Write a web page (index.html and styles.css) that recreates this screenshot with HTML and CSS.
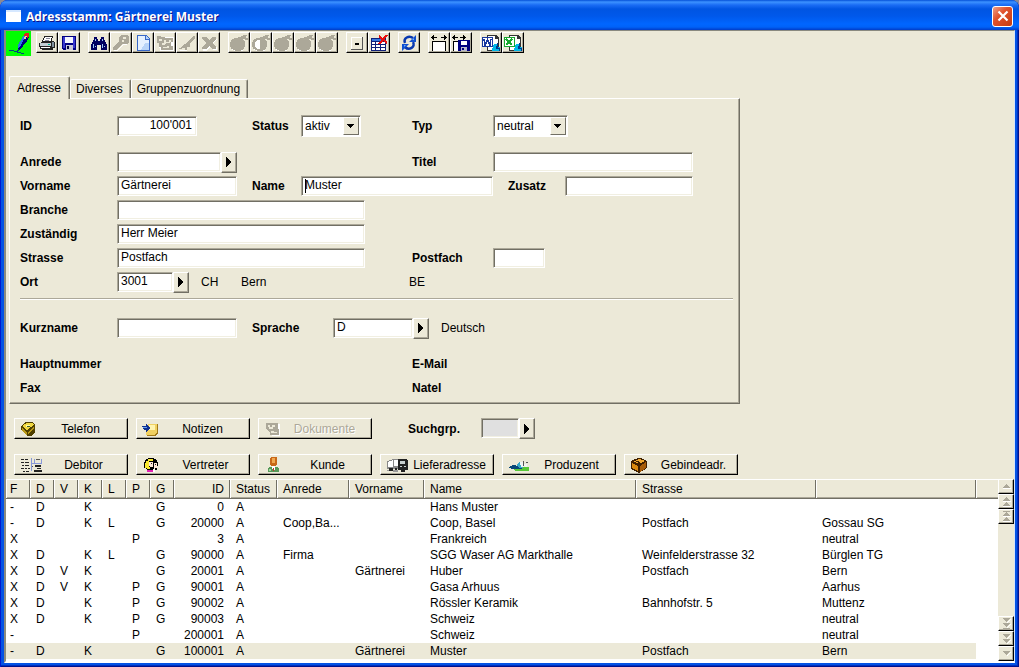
FILE: index.html
```html
<!DOCTYPE html>
<html lang="de">
<head>
<meta charset="utf-8">
<title>Adressstamm: Gärtnerei Muster</title>
<link rel="stylesheet" href="styles.css">
</head>
<body>
<svg class="defs" aria-hidden="true">
  <symbol id="i-right" viewBox="0 0 6 10"><path d="M0 0h1v1h1v1h1v1h1v1h1v2h-1v1h-1v1h-1v1h-1v1h-1z"/></symbol>
  <symbol id="i-drop" viewBox="0 0 8 4"><path d="M0 0h7v1h-1v1h-1v1h-1v1h-1v-1h-1v-1h-1v-1h-1z"/></symbol>
  <symbol id="i-bomb" viewBox="0 0 20 18"><path fill="#fff" d="M4 5h9v2h2v7h-1v3h-9v-1h-2v-3h-1v-6h2z"/><path fill="#aca899" d="M5 4h4v-1h4v1h1v2h1v1h1v6h-1v2h-1v1h-2v1h-6v-1h-2v-1h-2v-2h-1v-5h1v-2h1v-1h2zM12 2h2v-1h4v1h-1v2h2v2h-3v-1h-4z"/></symbol>
  <symbol id="i-up" viewBox="0 0 9 5"><path fill="#aca899" d="M4 0h1v1h1v1h1v1h1v1h-7v-1h1v-1h1v-1h1z"/><path fill="#fff" d="M1 4h8v1h-8z"/></symbol>
  <symbol id="i-down" viewBox="0 0 9 5"><path fill="#aca899" d="M1 0h7v1h-1v1h-1v1h-1v1h-1v-1h-1v-1h-1v-1h-1z"/><path fill="#fff" d="M8 1h1v1h-1v1h-1v1h-1v1h-1v-1h1v-1h1v-1h1z"/></symbol>
</svg>

<div class="window">
  <header class="titlebar">
    <svg class="appicon" viewBox="0 0 15 12"><rect width="15" height="12" fill="#fff"/><rect x="0" y="0" width="15" height="2" fill="#d6e8ff"/></svg>
    <h1>Adressstamm: Gärtnerei Muster</h1>
    <button class="close" aria-label="Schliessen"><svg viewBox="0 0 12 12" width="12" height="12"><path d="M1.500 1.500l9 9M10.500 1.500l-9 9" stroke="#fff" stroke-width="2.200"/></svg></button>
  </header>

  <main class="client">
    <div class="toolbar" role="toolbar">
      <button class="edit" aria-label="Bearbeiten"><svg viewBox="0 0 25 25"><path fill="#000080" d="M19 3h4v3l-2 4-4 5-4 4h-1v-3l2-5z"/><path fill="#2878e0" d="M18 4h2l-5 10-3 3v-3z"/><path fill="#e02020" d="M19 2h4v3l-1 2-4-2z"/><path fill="#f4c8a0" d="M19 5h2l-1 3h-2z"/><path fill="none" stroke="#004080" d="M13 18l-2 3-3-1-5-1M11 21l4 1h3"/></svg></button>
      <div class="tools">
        <button aria-label="Drucken"><svg viewBox="0 0 20 18"><path fill="#222" d="M7 2h9v2h-1v3h2v1h1v6h-2v2h-11v-1h-2v-2h-1v-4h2v-1h1v-2h1v-2h1z"/><path fill="#fff" d="M8 3h7v1h-1v3h-8v-1h1v-2h1zM4 13h9v1h-9z"/><path fill="#889" d="M9 4h4v1h-4zM8 6h4v1h-4z"/><path fill="#c4ced4" d="M3 9h11v3h-11z"/><path fill="#0b9" d="M11 10h2v1h-2z"/><path fill="#8090a0" d="M15 8h2v5h-2z"/></svg></button>
        <button aria-label="Speichern"><svg viewBox="0 0 20 18"><path fill="#000080" d="M3 2h14v14h-13l-1-1z"/><path fill="#3838d0" d="M4 3h2v11h-2zM14 3h2v11h-2z"/><path fill="#f4f6ff" d="M6 3h8v6h-8z"/><path fill="#c8c8d8" d="M7 11h7v5h-7z"/><path fill="#000040" d="M8 12h2v3h-2z"/></svg></button>
      </div>
      <div class="tools">
        <button aria-label="Suchen"><svg viewBox="0 0 20 18"><path fill="#000060" d="M5 3h3v2h1v2h2v-2h1v-2h3v3h1v2h1v2h1v6h-6v-5h-4v5h-6v-6h1v-2h1v-2h1z"/><path fill="#9cc8f8" d="M6 5h1v2h-1zM13 5h1v2h-1zM4 10h1v4h-1zM13 10h1v4h-1zM6 12h1v1h-1zM15 12h1v1h-1z"/></svg></button>
        <button disabled aria-label="Schlüssel"><svg viewBox="0 0 20 18"><path fill="#aca899" d="M10 1h6l2 2v5l-2 2h-5l-6 6h-3v-3l6-5v-5z"/><path fill="#ece9d8" d="M12 3h3v2h-3zM11 6h2v2h-2z"/><path fill="#fff" d="M6 16l6-6h4v1h-4l-6 6h-3v-1z"/></svg></button>
        <button aria-label="Neu"><svg viewBox="0 0 20 18"><path fill="#3868c8" d="M4 1h9l4 4v12h-13z"/><path fill="#e4f0ff" d="M5 2h7v4h4v10h-11z"/><path fill="#b8d4f8" d="M13 2l3 3h-3zM12 9h4v7h-8z"/></svg></button>
        <button disabled aria-label="Kopieren"><svg viewBox="0 0 20 18"><path fill="#fff" d="M3 3h16v14h-14z"/><path fill="#aca899" d="M2 2h4v1h4v1h8v4h-2v4h2v4h-12v-3h-2v-4h-2z"/><path fill="#ece9d8" d="M4 5h3v2h-3zM9 6h2v2h3v-2h2v1l-2 2h-3l-2 2h-2v-2h2zM8 13h4v-1h2v2h-6z"/></svg></button>
        <button disabled aria-label="Ändern"><svg viewBox="0 0 20 18"><path fill="#fff" d="M18 3l-8 9v5h-7v-1h6v-5z"/><path fill="#aca899" d="M16 2h2v2l-5 5v2l-4 3v2h-1v-2h-3v1h-3v-1l3-1 2-3 3-1 1-2z"/><path fill="#aca899" d="M9 9h4v4h-3v3h-2v-5h1z"/></svg></button>
        <button disabled aria-label="Löschen"><svg viewBox="0 0 20 18"><path fill="#fff" d="M5 5h3l3 3 3-3h4l-4 4 4 5v2h-4l-3-3-4 4h-3v-2l4-4z"/><path fill="#aca899" d="M3 3h4l3 3 3-3h4v2l-4 4 4 4v2h-4l-3-3-3 3h-4v-2l4-4-4-4z"/></svg></button>
      </div>
      <div class="tools">
        <button disabled aria-label="Anfang"><svg><use href="#i-bomb"/></svg></button>
        <button disabled aria-label="Zurück"><svg viewBox="0 0 20 18"><use href="#i-bomb"/><path fill="#fff" d="M6 6h3v9h-3l-2-2v-5z"/></svg></button>
        <button disabled aria-label="Stopp"><svg><use href="#i-bomb"/></svg></button>
        <button disabled aria-label="Vor"><svg><use href="#i-bomb"/></svg></button>
        <button disabled aria-label="Ende"><svg><use href="#i-bomb"/></svg></button>
      </div>
      <div class="tools">
        <button aria-label="Minimieren"><svg viewBox="0 0 20 18"><path fill="#fff" d="M4 3h12v12h-12z"/><path fill="#555" d="M15 3h1v13h-12v-1h11z"/><path fill="#ece9d8" d="M5 4h10v11h-10z"/><path d="M8 9h4v2h-4z"/></svg></button>
        <button aria-label="Tabelle löschen"><svg viewBox="0 0 20 18"><path fill="#102078" d="M2 4h15v13h-15z"/><path fill="#3878e0" d="M3 5h13v2h-13z"/><path fill="#fff" d="M3 8h3v2h-3zM7 8h4v2h-4zM12 8h4v2h-4zM3 11h3v2h-3zM7 11h4v2h-4zM12 11h4v2h-4zM3 14h3v2h-3zM7 14h4v2h-4zM12 14h4v2h-4z"/><path fill="none" stroke="#e81010" stroke-width="2" d="M10 2l8 7M18 1l-8 9"/></svg></button>
      </div>
      <div class="tools">
        <button aria-label="Aktualisieren"><svg class="smooth" viewBox="0 0 20 18"><path fill="none" stroke="#0838b0" stroke-width="2.500" d="M6 9C4 4 10 1 14 4M14 8c3 5-4 9-8 5"/><path fill="#1050d0" d="M17 1v7h-7zM3 17v-7h7z"/><path fill="#70b0ff" d="M15 4v2h-2zM5 13v-2h2z"/></svg></button>
      </div>
      <div class="tools">
        <button aria-label="Spaltenbreite"><svg viewBox="0 0 20 18"><path d="M2 3h1v-1h1v-1h1v2h3v1h-3v2h-1v-1h-1v-1h-1zM12 3h3v-2h1v1h1v1h1v1h-1v1h-1v1h-1v-2h-3z"/><path d="M3 7h14v10h-1v-9h-12v9h-1z"/><path fill="#fff" d="M4 8h12v9h-12z"/></svg></button>
        <button aria-label="Spaltenbreite speichern"><svg viewBox="0 0 20 18"><path d="M1 3h1v-1h1v-1h1v2h3v1h-3v2h-1v-1h-1v-1h-1zM9 3h3v-2h1v1h1v1h1v1h-1v1h-1v1h-1v-2h-3zM2 7h6v1h-5v9h-1z"/><path fill="#fff" d="M3 8h4v9h-4z"/><path fill="#000080" d="M7 6h12v11h-12z"/><path fill="#fff" d="M10 7h6v4h-6z"/><path fill="#bbc" d="M10 13h6v4h-6z"/><path fill="#000080" d="M11 14h2v2h-2z"/></svg></button>
      </div>
      <div class="tools">
        <button aria-label="Word"><svg viewBox="0 0 20 18"><path fill="#333" d="M6 1h9l3 3v13h-12z"/><path fill="#fff" d="M7 2h7v3h3v11h-10z"/><path fill="#1838a0" d="M1 3h11v10h-11z"/><path fill="#fff" d="M2 4h9v8h-9z"/><path fill="none" stroke="#1838a0" stroke-width="1.500" d="M3 5l1 6 2.500-5 2.500 5 1-6"/><path fill="#00b8e8" d="M13 10h4v3h2v4h-8v-2z"/><path fill="#003890" d="M16 9h1v5h2v3h-1v-2h-3z"/></svg></button>
        <button aria-label="Excel"><svg viewBox="0 0 20 18"><path fill="#333" d="M6 1h9l3 3v13h-12z"/><path fill="#fff" d="M7 2h7v3h3v11h-10z"/><path fill="#18a830" d="M1 3h11v10h-11z"/><path fill="#fff" d="M2 4h9v8h-9z"/><path fill="none" stroke="#18a830" stroke-width="2" d="M3 5l6 6M9 5l-6 6"/><path fill="#00b8e8" d="M13 10h4v3h2v4h-8v-2z"/><path fill="#003890" d="M16 9h1v5h2v3h-1v-2h-3z"/></svg></button>
      </div>
    </div>

    <div class="tabs" role="tablist">
      <button role="tab" aria-selected="true" class="tab active">Adresse</button>
      <button role="tab" aria-selected="false" class="tab">Diverses</button>
      <button role="tab" aria-selected="false" class="tab">Gruppenzuordnung</button>
    </div>

    <form class="panel" role="tabpanel">
      <div class="fields">
        <label class="c1" for="id">ID</label><input class="c2 w80 num" id="id" value="100'001">
        <label class="c3" for="status">Status</label><span class="c4 combo w60"><select id="status"><option>aktiv</option></select><i><svg><use href="#i-drop"/></svg></i></span>
        <label class="c6" for="typ">Typ</label><span class="c7 combo w75"><select id="typ"><option>neutral</option></select><i><svg><use href="#i-drop"/></svg></i></span>
      </div>
      <div class="fields">
        <label class="c1" for="anrede">Anrede</label><span class="c2 lookup w120"><input id="anrede"><button type="button" aria-label="Anrede wählen"><svg><use href="#i-right"/></svg></button></span>
        <label class="c6" for="titel">Titel</label><input class="c7" id="titel">

        <label class="c1" for="vorname">Vorname</label><input class="c2 w120" id="vorname" value="Gärtnerei">
        <label class="c3" for="name">Name</label><input class="c4 long caret" id="name" value="Muster">
        <label class="c8" for="zusatz">Zusatz</label><input class="c9" id="zusatz">

        <label class="c1" for="branche">Branche</label><input class="c2 w248" id="branche">
        <label class="c1" for="zust">Zuständig</label><input class="c2 w248" id="zust" value="Herr Meier">
        <label class="c1" for="strasse">Strasse</label><input class="c2 w248" id="strasse" value="Postfach">
        <label class="c6" for="pf">Postfach</label><input class="c7 w52" id="pf">

        <label class="c1" for="ort">Ort</label><span class="c2 line"><span class="lookup w72"><input id="ort" value="3001"><button type="button" aria-label="Ort wählen"><svg><use href="#i-right"/></svg></button></span><output class="land">CH</output><output>Bern</output></span>
        <output class="kanton">BE</output>
      </div>
      <hr>
      <div class="fields">
        <label class="c1" for="kurz">Kurzname</label><input class="c2 w120" id="kurz">
        <label class="c3" for="sprache">Sprache</label><span class="c5 line"><span class="lookup w96"><input id="sprache" value="D"><button type="button" aria-label="Sprache wählen"><svg><use href="#i-right"/></svg></button></span><output>Deutsch</output></span>
      </div>
      <div class="fields">
        <b class="c1">Hauptnummer</b><b class="c6">E-Mail</b>
        <b class="c1">Fax</b><b class="c6">Natel</b>
      </div>
    </form>

    <div class="actions">
      <button class="small"><svg viewBox="1 0 16 16"><path fill="#504000" d="M2 5l5-4h6l3 3v8l-4 3h-4l-6-6z"/><path fill="#f0d840" d="M3 5l5-3h5l2 2-7 5z"/><path fill="#fff8a0" d="M7 4h4v2h-4z"/><path fill="#b89818" d="M3 7l5 4v3l-5-4zM9 11l6-5v2l-6 5z"/><path fill="#3a6030" d="M8 5h3v1h-3z"/></svg><span>Telefon</span></button>
      <button class="small"><svg viewBox="1 0 16 16"><path fill="#f0d060" d="M7 3h10v9l-3 3h-8l-1-3z"/><path fill="#fff4b0" d="M8 4h6v5h-6z"/><path fill="#a07818" d="M16 3h1v9l-3 3h-8v-1h7l3-3z"/><path fill="#103090" d="M1 5h4v-2l5 4-5 4v-2h-2z"/><path fill="#60a0f0" d="M2 6h4v1h-4z"/></svg><span>Notizen</span></button>
      <button class="small" disabled><svg viewBox="1 0 16 16"><path fill="#fff" d="M4 3h13v12h-8z"/><path fill="#aca899" d="M3 2h12v6h1v6h-9v-2l-4-4z"/><path fill="#ece9d8" d="M5 4h2v2h2v-2h3v2h-2v2h-4zM8 10h3v1h3v1h-6z"/></svg><span>Dokumente</span></button>
      <div class="search"><label for="such">Suchgrp.</label><span class="lookup w54"><input id="such" class="off"><button type="button" aria-label="Suchgruppe wählen"><svg><use href="#i-right"/></svg></button></span></div>
      <button><svg viewBox="0 0 22 16"><path fill="#222" d="M1 2h3v1h-3zM5 2h3v1h-3zM1 5h3v1h-3zM5 5h4v1h-4zM2 8h2v1h-2zM5 8h4v1h-4zM1 11h3v1h-3zM5 11h2v1h-2zM8 11h2v1h-2zM3 14h2v1h-2zM6 14h3v1h-3zM15 8h6v2h-6zM14 13h8v2h-8zM17 11h4v1h-4z"/><path fill="#8898d8" d="M11 1h1v13h-1zM11 6h11v1h-11zM21 2h1v5h-1zM14 2h1v4h-1z"/><path fill="#555" d="M16 2h4v1h-4zM12 9h1v1h-1z"/></svg><span>Debitor</span></button>
      <button><svg viewBox="0 0 22 16"><path d="M6 1h6v1h2v1h1v2h1v4h-1v4h-3v2h-7v-3h-1v-1h-2v-6h1v-2h1v-1h2z"/><path fill="#f8e830" d="M6 2h5v2h-4v6h1v2h-3v-1h-2v-5h1v-2h2z"/><path fill="#ffe8d8" d="M7 5h4v5h-3v-1h-1zM12 6h3v5h-2v1h-1z"/><path fill="#222" d="M9 6h1v1h-1zM13 7h1v1h-1z"/><path fill="#e020b0" d="M5 13h6v2h-6z"/><path fill="#fff" d="M11 12h2v3h-2z"/></svg><span>Vertreter</span></button>
      <button><svg viewBox="0 0 22 16"><path fill="#c86818" d="M7 0h5l1 1v6l-2 3h-3l-2-3v-6z"/><path fill="#f0a850" d="M8 1h3v5h-3z"/><path fill="#589858" d="M5 10h9l1 2v3h-11v-3z"/><path fill="#fff" d="M8 9h3v3l-1 2-2-2z"/><path fill="#c03030" d="M9 11h1v3h-1z"/><path fill="#a0d8a0" d="M5 12h2v2h-2z"/></svg><span>Kunde</span></button>
      <button><svg viewBox="0 0 22 16"><path fill="#888" d="M1 4l6-2h5v10h-11z"/><path fill="#fff" d="M2 5l5-2v7h-5zM8 3h4v6h-4z"/><path fill="#222" d="M12 2h8l2 2v9h-3v2h-4v-2h-3z"/><path fill="#c8d0d0" d="M14 4h5v3h-5zM14 9h2v1h-2zM18 9h2v1h-2z"/><path fill="#222" d="M3 11h4v3h-4zM9 11h2v3h-2z"/><path fill="#999" d="M1 13h2v1h-2zM7 13h5v2h-5z"/></svg><span>Lieferadresse</span></button>
      <button><svg viewBox="0 0 22 16"><path fill="#58c838" d="M5 12l6-3 10 1v4h-14z"/><path fill="#084878" d="M1 10l4-2 6 1 3 3h-10l-3-1z"/><path fill="#38a8c8" d="M8 8l4-3h3v6h-3z"/><path fill="#f0f4f4" d="M12 5h3l1 5h-3zM16 7h3v3h-2z"/><path fill="#555" d="M15 4h1v5h-1zM18 5h2v1h-2z"/></svg><span>Produzent</span></button>
      <button><svg viewBox="0 0 22 16"><path fill="#402000" d="M1 4l7-3h3l6 3v7l-8 5-8-4z"/><path fill="#f0a830" d="M3 4l6-2 6 2-6 3z"/><path fill="#d88810" d="M2 6l6 3v5l-6-3z"/><path fill="#a85c08" d="M10 9l6-4v6l-6 4z"/><path fill="#402000" d="M5 3l5 2v3l-2-1v-2l-4-1z"/></svg><span>Gebindeadr.</span></button>
    </div>

    <div class="list">
      <table>
        <colgroup><col span="7" class="k"><col class="k-id"><col class="k-st"><col class="k-an"><col class="k-vo"><col class="k-na"><col class="k-str"><col class="k-ort"><col></colgroup>
        <thead><tr><th>F</th><th>D</th><th>V</th><th>K</th><th>L</th><th>P</th><th>G</th><th class="num">ID</th><th>Status</th><th>Anrede</th><th>Vorname</th><th>Name</th><th>Strasse</th><th></th><th></th></tr></thead>
        <tbody>
          <tr><td>-</td><td>D</td><td></td><td>K</td><td></td><td></td><td>G</td><td class="num">0</td><td>A</td><td></td><td></td><td>Hans Muster</td><td></td><td></td><td></td></tr>
          <tr><td>-</td><td>D</td><td></td><td>K</td><td>L</td><td></td><td>G</td><td class="num">20000</td><td>A</td><td>Coop,Ba...</td><td></td><td>Coop, Basel</td><td>Postfach</td><td>Gossau SG</td><td></td></tr>
          <tr><td>X</td><td></td><td></td><td></td><td></td><td>P</td><td></td><td class="num">3</td><td>A</td><td></td><td></td><td>Frankreich</td><td></td><td>neutral</td><td></td></tr>
          <tr><td>X</td><td>D</td><td></td><td>K</td><td>L</td><td></td><td>G</td><td class="num">90000</td><td>A</td><td>Firma</td><td></td><td>SGG Waser AG Markthalle</td><td>Weinfelderstrasse 32</td><td>Bürglen TG</td><td></td></tr>
          <tr><td>X</td><td>D</td><td>V</td><td>K</td><td></td><td></td><td>G</td><td class="num">20001</td><td>A</td><td></td><td>Gärtnerei</td><td>Huber</td><td>Postfach</td><td>Bern</td><td></td></tr>
          <tr><td>X</td><td>D</td><td>V</td><td>K</td><td></td><td>P</td><td>G</td><td class="num">90001</td><td>A</td><td></td><td></td><td>Gasa Arhuus</td><td></td><td>Aarhus</td><td></td></tr>
          <tr><td>X</td><td>D</td><td></td><td>K</td><td></td><td>P</td><td>G</td><td class="num">90002</td><td>A</td><td></td><td></td><td>Rössler Keramik</td><td>Bahnhofstr. 5</td><td>Muttenz</td><td></td></tr>
          <tr><td>X</td><td>D</td><td></td><td>K</td><td></td><td>P</td><td>G</td><td class="num">90003</td><td>A</td><td></td><td></td><td>Schweiz</td><td></td><td>neutral</td><td></td></tr>
          <tr><td>-</td><td></td><td></td><td></td><td></td><td>P</td><td></td><td class="num">200001</td><td>A</td><td></td><td></td><td>Schweiz</td><td></td><td>neutral</td><td></td></tr>
          <tr class="selected"><td>-</td><td>D</td><td></td><td>K</td><td></td><td></td><td>G</td><td class="num">100001</td><td>A</td><td></td><td>Gärtnerei</td><td>Muster</td><td>Postfach</td><td>Bern</td><td></td></tr>
        </tbody>
      </table>
      <div class="scroll">
        <button aria-label="Zeile hoch"><svg><use href="#i-up"/></svg></button>
        <button aria-label="Seite hoch"><svg><use href="#i-up"/></svg><svg><use href="#i-up"/></svg></button>
        <button aria-label="Zum Anfang"><i></i><svg><use href="#i-up"/></svg><svg><use href="#i-up"/></svg></button>
        <span class="track"></span>
        <button aria-label="Zum Ende"><svg><use href="#i-down"/></svg><svg><use href="#i-down"/></svg><i></i></button>
        <button aria-label="Seite runter"><svg><use href="#i-down"/></svg><svg><use href="#i-down"/></svg></button>
        <button aria-label="Zeile runter"><svg><use href="#i-down"/></svg></button>
      </div>
    </div>
  </main>
</div>
</body>
</html>
```

FILE: styles.css
```css
* { box-sizing: border-box; }

body {
  margin: 0;
  background: #8a8a94;
  font: 12px/16px "Liberation Sans", Arial, sans-serif;
  color: #000;
}

button, input, select { font: inherit; color: inherit; margin: 0; border-radius: 0; }
button { padding: 0; background: #ece9d8; }
svg { display: block; shape-rendering: crispEdges; }
.smooth { shape-rendering: auto; }
.defs { position: absolute; width: 0; height: 0; }

.window {
  display: flex;
  flex-direction: column;
  min-height: 100vh;
  padding: 0 4px 4px;
  border-radius: 8px 8px 0 0;
  background: #0453e4;
  box-shadow: inset 1px 0 #0019cf, inset -1px -1px #00138c, inset -2px -2px #0030c0;
}

.titlebar {
  display: flex;
  align-items: center;
  gap: 5px;
  height: 30px;
  margin: 0 -4px;
  padding: 2px 6px 0;
  border-radius: 8px 8px 0 0;
  background: linear-gradient(#0450d8 0, #3c92ff 2px, #1a6cf4 5px, #0055e2 9px, #0058ea 16px, #0066ff 24px, #0062f8 27px, #003cc8 30px);
  color: #fff;
}
.titlebar h1 {
  flex: 1;
  margin: 0;
  padding-top: 2px;
  font: bold 12px/16px "Open Sans", sans-serif;
  text-shadow: 1px 1px #0f1089;
}
.appicon { width: 15px; height: 12px; }
.close {
  display: grid;
  place-items: center;
  width: 21px;
  height: 21px;
  border: 1px solid #fff;
  border-radius: 3px;
  background: linear-gradient(135deg, #f0a088, #e0512c 40%, #c43c10);
}
.close svg { shape-rendering: auto; }

.client {
  flex: 1;
  display: flex;
  flex-direction: column;
  border: 1px solid;
  border-color: #8a8a80 #d8e4f8 #fff #8a8a80;
  border-left-width: 2px;
  border-bottom-width: 2px;
  background: #ece9d8;
}

/* Toolbar */
.toolbar { display: flex; gap: 8px; height: 25px; }
.edit { width: 25px; height: 25px; margin-right: -3px; border: 0; background: #0f0; }
.tools { display: flex; padding-top: 1px; }
.tools button {
  width: 22px;
  height: 21px;
  border: 1px solid;
  border-color: #fff #000 #000 #fff;
  box-shadow: inset -1px -1px #aca899;
}
.tools svg { width: 20px; height: 18px; }

/* Tabs */
.tabs { display: flex; align-items: flex-end; margin: 20px 0 0 3px; height: 22px; }
.tab {
  height: 19px;
  padding: 0 7px 0 5px;
  border: 1px solid;
  border-color: #fff #716f64 transparent #fff;
  border-bottom: 0;
  border-radius: 2px 2px 0 0;
  box-shadow: inset -1px 0 #aca899;
}
.tab.active { position: relative; height: 23px; margin-bottom: -1px; padding: 0 8px 1px 7px; }

/* Address form */
.panel {
  align-self: flex-start;
  margin-left: 3px;
  padding: 15px 6px 3px 10px;
  border: 1px solid;
  border-color: #fff #716f64 #716f64 #fff;
  box-shadow: inset -1px -1px #aca899;
}
.fields {
  display: grid;
  grid-template-columns: 97px 135px 49px 32px 76px 3px 81px 15px 57px 128px;
  grid-auto-rows: 24px;
  align-items: center;
  margin-bottom: 12px;
  padding-right: 40px;
}
.fields:last-child { margin-bottom: 0; }
label, b { font-weight: bold; }
.c1 { grid-column: 1; }
.c2 { grid-column: 2; }
.c3 { grid-column: 3; }
.c4 { grid-column: 4 / span 2; }
.c4.long { grid-column: 4 / span 4; }
.c5 { grid-column: 5 / span 6; }
.c6 { grid-column: 7; }
.c7 { grid-column: 8 / span 3; }
.c8 { grid-column: 9; }
.c9 { grid-column: 10; }
.kanton { grid-column: 6 / span 2; }

input {
  width: 100%;
  min-width: 0;
  height: 20px;
  padding: 0 3px 2px;
  border: 1px solid;
  border-color: #aca899 #fff #fff #aca899;
  box-shadow: inset 1px 1px #716f64, inset -1px -1px #f1efe2;
  background: #fff;
  outline: 0;
}
input.off { background: #e0e0e0; }
.num { text-align: right; }
input.num { padding-right: 4px; }
.caret { background: linear-gradient(#000, #000) 3px 2px / 1px 14px no-repeat #fff; }

/* The grid tracks put these columns at 117, 252, 301, 333, 412 and 493 */
.w52 { width: 52px; }
.w54 { width: 54px; }
.w60 { width: 60px; }
.w72 { width: 72px; }
.w75 { width: 75px; }
.w80 { width: 80px; }
.w96 { width: 96px; }
.w120 { width: 120px; }
.w248 { width: 248px; }

.lookup { display: flex; }
.lookup input { flex: 1; }
.lookup button {
  display: grid;
  place-items: center;
  width: 16px;
  height: 21px;
  border: 1px solid;
  border-color: #fff #716f64 #716f64 #fff;
  box-shadow: inset -1px -1px #aca899;
}
.lookup svg { width: 6px; height: 10px; }
.line { display: flex; align-items: center; gap: 12px; }
.line .lookup { flex: none; }
.land { flex: none; width: 28px; }

.combo { position: relative; height: 22px; }
.combo select {
  appearance: none;
  width: 100%;
  height: 22px;
  padding: 0 3px;
  border: 1px solid;
  border-color: #aca899 #fff #fff #aca899;
  box-shadow: inset 1px 1px #716f64;
  background: #fff;
}
.combo i {
  position: absolute;
  inset: 2px 2px 2px auto;
  display: grid;
  place-items: center;
  width: 16px;
  border: 1px solid;
  border-color: #fff #716f64 #716f64 #fff;
  background: #ece9d8;
  pointer-events: none;
}
.combo svg { width: 8px; height: 4px; }

hr {
  height: 2px;
  margin: -8px 0 16px;
  border: 0;
  border-top: 1px solid #aca899;
  border-bottom: 1px solid #fff;
}

/* Action buttons */
.actions {
  display: grid;
  grid-template-columns: repeat(6, 114px);
  gap: 15px 8px;
  margin: 14px 0 4px 8px;
}
.actions > button {
  display: flex;
  align-items: center;
  height: 21px;
  padding: 0 2px 0 5px;
  border: 1px solid;
  border-color: #fff #000 #000 #fff;
  box-shadow: inset -1px -1px #aca899;
}
.actions > button svg { flex: none; width: 22px; height: 16px; }
.actions > .small svg { width: 16px; }
.actions > button span { flex: 1; text-align: center; white-space: nowrap; }
.actions > button:disabled { color: #aca899; text-shadow: 1px 1px #fff; }
.search { grid-column: 4 / span 3; display: flex; align-items: center; padding-left: 28px; height: 21px; }
.search label { width: 73px; }

/* Address list */
.list { flex: 1; display: flex; background: #fff; }
table { flex: 1; align-self: flex-start; table-layout: fixed; width: 100%; border-collapse: separate; border-spacing: 0; }
.k { width: 24px; }
.k-id { width: 56px; }
.k-st { width: 47px; }
.k-an { width: 72px; }
.k-vo { width: 75px; }
.k-na { width: 212px; }
.k-str { width: 180px; }
.k-ort { width: 160px; }
th, td { height: 16px; padding: 0 0 0 6px; text-align: left; font-weight: normal; white-space: nowrap; }
th {
  height: 20px;
  border-top: 1px solid #fff;
  border-bottom: 1px solid #716f64;
  background: #ece9d8;
  box-shadow: inset -1px 0 #716f64, inset 1px 0 #fff, inset 0 -1px #aca899;
}
th:last-child { box-shadow: inset 1px 0 #fff, inset 0 -1px #aca899; }
th:first-child, td:first-child { padding-left: 4px; }
th.num, td.num { padding: 0 6px 0 0; text-align: right; }
.selected td:not(:last-child) { background: #ece9d8; }

.scroll { display: flex; flex-direction: column; width: 16px; background: #ece9d8; }
.scroll button {
  display: flex;
  flex-direction: column;
  align-items: center;
  justify-content: center;
  height: 15px;
  border: 1px solid;
  border-color: #fff #000 #000 #fff;
  box-shadow: inset -1px -1px #aca899;
}
.scroll svg { width: 9px; height: 5px; }
.scroll i { width: 7px; height: 1px; background: #aca899; }
.track { flex: 1; }
```
